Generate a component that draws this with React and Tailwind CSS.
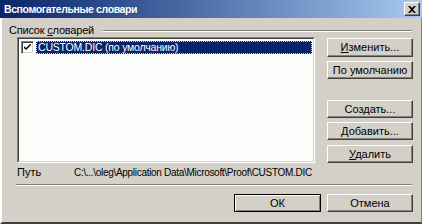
import React from 'react'

const font = { fontFamily: '"Liberation Sans", Arial, sans-serif' }

function Btn({ children, className = '', primary = false }) {
  return (
    <div
      className={
        'flex items-center justify-center bg-[#d4d0c8] text-[11px] text-black ' +
        (primary
          ? 'border border-black shadow-[inset_1px_1px_0_#ffffff,inset_-1px_-1px_0_#808080] '
          : 'border-t border-l border-t-white border-l-white border-r border-b border-r-[#404040] border-b-[#404040] shadow-[inset_-1px_-1px_0_#808080] ') +
        className
      }
    >
      {children}
    </div>
  )
}

export default function App() {
  return (
    <div className="w-[422px] h-[224px] bg-[#d4d0c8] flex flex-col overflow-hidden" style={font}>
      {/* title bar */}
      <div className="h-[18px] flex items-center justify-between bg-gradient-to-r from-[#0a246a] to-[#a6caf0] pl-[4px] pr-[2px]">
        <span className="text-white font-bold text-[10.5px] tracking-[-0.4px] leading-none">Вспомогательные словари</span>
        <div className="w-[16px] h-[14px] flex items-center justify-center bg-[#d4d0c8] border-t border-l border-white border-r border-b border-r-[#404040] border-b-[#404040] shadow-[inset_-1px_-1px_0_#808080]">
          <svg width="8" height="7" viewBox="0 0 8 7">
            <path d="M0 0 L2 0 L4 2 L6 0 L8 0 L5 3.5 L8 7 L6 7 L4 5 L2 7 L0 7 L3 3.5 Z" fill="#000" />
          </svg>
        </div>
      </div>

      <div className="flex-1 flex flex-col border-l-2 border-l-white border-b-2 border-b-[#404040] border-r border-r-[#808080]">
        {/* group header */}
        <div className="mt-[6px] h-[13px] flex items-center pl-[7px] pr-[9px] text-[11px] leading-[13px] text-black">
          <span className="tracking-[-0.2px]">Список <span className="underline">с</span>ловарей</span>
          <div className="flex-1 ml-[9px] h-[2px] border-t border-t-[#808080] border-b border-b-white" />
        </div>

        {/* main row */}
        <div className="flex pl-[15px]">
          <div className="w-[298px] h-[126px] border-t border-l border-t-[#808080] border-l-[#808080] border-r border-b border-r-white border-b-white">
            <div className="w-full h-full bg-[#fbfdfb] border-t border-l border-t-[#404040] border-l-[#404040] border-r border-b border-r-[#d4d0c8] border-b-[#d4d0c8] pt-[2px] pl-[2px] pr-[1px]">
              <div className="flex items-center h-[13px]">
                <div className="w-[13px] h-[13px] bg-white border-t border-l border-t-[#808080] border-l-[#808080] border-r border-b border-r-white border-b-white shadow-[inset_1px_1px_0_#404040,inset_-1px_-1px_0_#d4d0c8] flex items-center justify-center">
                  <svg width="7" height="7" viewBox="0 0 7 7">
                    <path d="M0 2 L0 4 L2 6 L7 1 L7 -1 L2 4 Z" fill="#000" />
                  </svg>
                </div>
                <div className="ml-[2px] flex-1 h-[13px] bg-[#0a246a] border border-dotted border-[#e8d890] text-white text-[10.5px] tracking-[-0.2px] leading-[11px] pl-[1px]">
                  CUSTOM.DIC (по умолчанию)
                </div>
              </div>
            </div>
          </div>

          <div className="ml-[12px] w-[86px] flex flex-col text-[#202020]">
            <Btn className="mt-[1px] h-[19px]"><span><span className="underline">И</span>зменить...</span></Btn>
            <Btn className="mt-[4px] h-[18px]">По умолчанию</Btn>
            <Btn className="mt-[21px] h-[18px]"><span>Соз<span className="underline">д</span>ать...</span></Btn>
            <Btn className="mt-[4px] h-[18px]"><span><span className="underline">Д</span>обавить...</span></Btn>
            <Btn className="mt-[5px] h-[18px]"><span><span className="underline">У</span>далить</span></Btn>
          </div>
        </div>

        {/* path row */}
        <div className="mt-[3px] flex pl-[15px] text-[11px] leading-[13px] text-black">
          <span className="w-[57px]">Путь</span>
          <span className="text-[10px] tracking-[-0.3px]">C:\...\oleg\Application Data\Microsoft\Proof\CUSTOM.DIC</span>
        </div>

        {/* separator */}
        <div className="mt-[5px] ml-[14px] mr-[9px] h-[2px] border-t border-t-[#808080] border-b border-b-white" />

        {/* bottom buttons */}
        <div className="mt-[8px] flex justify-end gap-[6px] pr-[8px]">
          <Btn primary className="w-[87px] h-[18px]">ОК</Btn>
          <Btn className="w-[86px] h-[18px]">Отмена</Btn>
        </div>
      </div>
    </div>
  )
}
